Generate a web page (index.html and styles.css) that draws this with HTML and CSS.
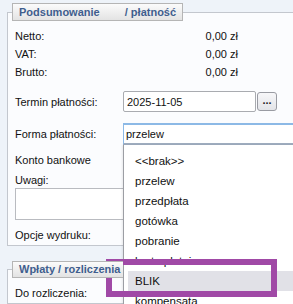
FILE: index.html
```html
<!DOCTYPE html>
<html lang="pl">
<head>
    <meta charset="UTF-8">
    <meta name="viewport" content="width=device-width, initial-scale=1.0">
    <title>Podsumowanie / płatność</title>
    <link rel="stylesheet" href="styles.css">
</head>
<body>
    <div class="page">
        <fieldset class="panel panel-summary">
            <legend><span class="legend-main">Podsumowanie</span> / płatność</legend>

            <div class="sum-row"><span>Netto:</span><span class="amount">0,00 zł</span></div>
            <div class="sum-row"><span>VAT:</span><span class="amount">0,00 zł</span></div>
            <div class="sum-row"><span>Brutto:</span><span class="amount">0,00 zł</span></div>

            <div class="field-row date-row">
                <label for="due-date">Termin płatności:</label>
                <input id="due-date" class="date-input" type="text" value="2025-11-05">
                <button class="pick-btn" type="button">...</button>
            </div>

            <div class="field-row select-row">
                <label>Forma płatności:</label>
                <div class="select-box">przelew</div>
            </div>

            <div class="plain-row">Konto bankowe</div>
            <div class="notes-label">Uwagi:</div>
            <div class="notes-box"></div>
            <div class="plain-row">Opcje wydruku:</div>
        </fieldset>

        <fieldset class="panel panel-payments">
            <legend>Wpłaty / rozliczenia</legend>
            <div class="sum-row"><span>Do rozliczenia:</span></div>
        </fieldset>

        <!-- open list of the "Forma płatności" select -->
        <ul class="dropdown">
            <li>&lt;&lt;brak&gt;&gt;</li>
            <li>przelew</li>
            <li>przedpłata</li>
            <li>gotówka</li>
            <li>pobranie</li>
            <li>karta płatnicza</li>
            <li class="hover">BLIK</li>
            <li>kompensata</li>
        </ul>

        <div class="callout"></div>
    </div>
</body>
</html>
```

FILE: styles.css
```css
:root {
    --page-bg: #eef3f9;
    --panel-bg: #fbfcfe;
    --panel-border: #c3c7ce;
    --legend-text: #3f5e8e;
    --field-border: #a9abb0;
    --focus-blue: #8cb9e6;
    --callout: #a049a6;
}

* {
    box-sizing: border-box;
}

body {
    margin: 0;
    background-color: var(--page-bg);
    font-family: 'Liberation Sans', Arial, sans-serif;
    font-size: 11px;
    color: #111;
    overflow: hidden;
}

.page {
    position: relative;
    width: 293px;
    height: 304px;
    padding-top: 3px;
    overflow: hidden;
}

.panel {
    margin: 0 0 0 7px;
    width: 330px;
    min-width: 0;
    padding: 6px 7px 1px 7px;
    border: 1px solid var(--panel-border);
    background-color: var(--panel-bg);
}

.panel legend {
    margin-left: -3px;
    height: 18px;
    padding: 0 6px;
    line-height: 16px;
    border: 1px solid #b5b5b5;
    background: linear-gradient(#fbfbfb, #e3e3e3);
    color: var(--legend-text);
    font-weight: bold;
}

.legend-main {
    margin-right: 22px;
}

.panel-payments {
    margin-top: 15px;
}

/* the open list covers the rest of this legend */
.panel-payments legend {
    position: relative;
    z-index: 3;
    width: 111px;
    height: 17px;
    line-height: 15px;
    white-space: nowrap;
    overflow: hidden;
    border-right: none;
}

.sum-row {
    display: grid;
    grid-template-columns: 108px 115px;
    height: 18px;
    line-height: 18px;
}

.amount {
    text-align: right;
}

.field-row {
    display: flex;
    align-items: center;
}

.field-row label {
    width: 108px;
    flex-shrink: 0;
}

.date-row {
    margin-top: 10px;
    height: 21px;
}

.date-input {
    width: 133px;
    height: 21px;
    margin: 0;
    padding: 0 3px;
    border: 1px solid var(--field-border);
    border-radius: 2px;
    background-color: #fff;
    font: inherit;
    color: #111;
}

.pick-btn {
    width: 20px;
    height: 19px;
    margin: 0 0 0 1px;
    padding: 0 0 3px;
    border: 1px solid #999ba2;
    border-radius: 3px;
    background: linear-gradient(#f7f7f9, #e3e4e8);
    font: inherit;
    font-weight: bold;
    color: #222;
}

.select-row {
    margin-top: 11px;
    height: 22px;
}

.select-box {
    flex: 1;
    height: 22px;
    padding-left: 2px;
    line-height: 18px;
    border: 1px solid var(--focus-blue);
    border-top-width: 2px;
    border-bottom: 2px solid #9fadbf;
    background-color: #fff;
}

.plain-row {
    margin-top: 6px;
    height: 18px;
    line-height: 18px;
}

.notes-label {
    margin-top: 3px;
    height: 16px;
    line-height: 16px;
}

.notes-box {
    width: 200px;
    height: 32px;
    border: 1px solid #b9bbc0;
    background-color: #fff;
}

.dropdown {
    position: absolute;
    z-index: 1;
    left: 123px;
    top: 145px;
    width: 200px;
    height: 170px;
    margin: 0;
    padding: 6px 0 0 4px;
    list-style: none;
    font-size: 11.5px;
    background-color: #fff;
    border-left: 1px solid #9c9ea4;
    box-shadow: -1px 0 2px rgba(0, 0, 0, 0.08);
}

.dropdown li {
    height: 20px;
    padding-left: 7px;
    line-height: 20px;
}

.dropdown li.hover {
    background-color: #e1e1e7;
}

.callout {
    position: absolute;
    z-index: 2;
    left: 106px;
    top: 259px;
    width: 171px;
    height: 38px;
    border: 6px solid var(--callout);
}
```
